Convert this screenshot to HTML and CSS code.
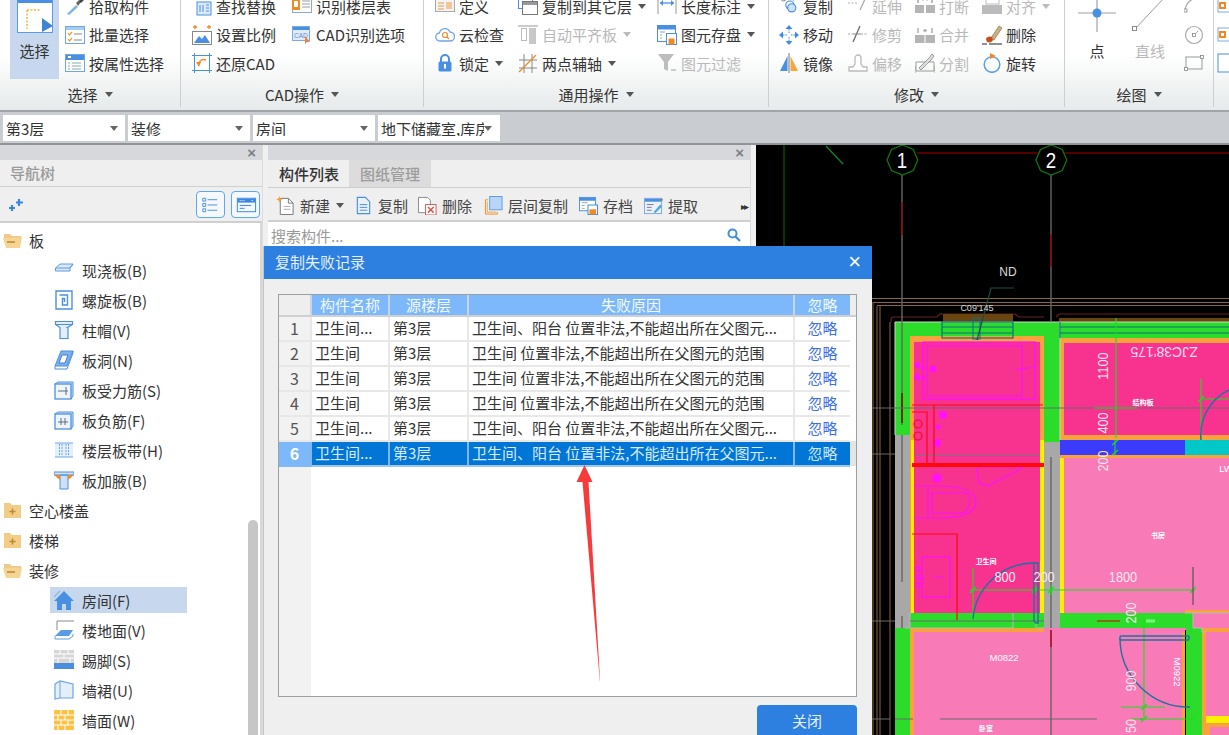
FILE: index.html
```html
<!DOCTYPE html>
<html lang="zh-CN">
<head>
<meta charset="utf-8">
<title>复制失败记录</title>
<link rel="stylesheet" href="styles.css">
</head>
<body>
<svg class="defs" width="0" height="0" aria-hidden="true">
  <defs>
    <symbol id="i-pick" viewBox="0 0 20 20"><path d="M2 18 11 9l2 2-9 8z" fill="#7fb2ea"/><path d="M11 7l3-3 2 2-3 4z" fill="#666"/><path d="M14 5l3-3 2 2-3 3z" fill="#444"/></symbol>
    <symbol id="i-batch" viewBox="0 0 20 20"><rect x=".5" y="1.5" width="19" height="17" fill="#fff" stroke="#6ea6e6"/><rect x="1" y="2" width="18" height="3" fill="#a9cbf2"/><path d="M3 8l1.5 2 2.5-3M3 14l1.5 2 2.5-3" fill="none" stroke="#f0993a" stroke-width="1.2"/><path d="M9 9h8M9 15h8" stroke="#888"/></symbol>
    <symbol id="i-attr" viewBox="0 0 20 20"><rect x=".5" y="1.5" width="19" height="17" fill="#fff" stroke="#6ea6e6"/><rect x="1" y="2" width="18" height="5" fill="#4a90e2"/><rect x="3" y="3" width="3" height="2" fill="#fff"/><path d="M3 10h2M7 10h9M3 13h2M7 13h9M3 16h2M7 16h9" stroke="#8aa"/></symbol>
    <symbol id="i-find" viewBox="0 0 20 20"><rect x="5" y="6" width="14" height="13" fill="#dce9f9" stroke="#4a90e2"/><path d="M8 9v7M11 9v7M14 9h3M14 12h3M14 15h3" stroke="#4a90e2"/><path d="M15 0v4M13.500 2h3" stroke="#f08a24" stroke-width="1.200"/><rect x="0" y="0" width="5" height="3" fill="#bbb"/></symbol>
    <symbol id="i-scale" viewBox="0 0 20 20"><rect x=".5" y="6.500" width="19" height="13" fill="#fff" stroke="#888"/><path d="M2 18 7 11l3 3 3-4 5 8z" fill="#4a90e2"/><path d="M3 0v4M1 2h4M17 0v4M15 2h4" stroke="#f08a24" stroke-width="1.300"/></symbol>
    <symbol id="i-restore" viewBox="0 0 20 20"><rect x="2.500" y="2.500" width="15" height="15" fill="#fff" stroke="#4a90e2"/><path d="M0 2.500h5M0 17.500h5M15 2.500h5M15 17.500h5M2.500 0v5M17.500 0v5M2.500 15v5M17.500 15v5" stroke="#4a90e2"/><path d="M14 7a5 5 0 0 0-7 3" fill="none" stroke="#f08a24" stroke-width="1.500"/><path d="M4 9l5 0-2 5z" fill="#f08a24"/></symbol>
    <symbol id="i-floor" viewBox="0 0 20 20"><rect x=".5" y="1.500" width="19" height="15" fill="#fff" stroke="#8aa9cf"/><rect x="0" y="3" width="8" height="11" fill="#f08a24"/><rect x="2" y="5" width="4" height="6" fill="#fff"/><path d="M10 5h8M10 8h8M10 11h8" stroke="#99a"/></symbol>
    <symbol id="i-cadopt" viewBox="0 0 20 20"><rect x=".5" y="1.500" width="17" height="14" fill="#dfeafa" stroke="#7ea9de"/><rect x="1" y="2" width="16" height="3" fill="#4a90e2"/><text x="2" y="13" font-size="6.500" fill="#5b8fd0" font-family="Liberation Sans, sans-serif">CAD</text><path d="M13 11v8l2-2 3 0z" fill="#f0803c"/></symbol>
    <symbol id="i-def" viewBox="0 0 20 20"><rect x=".5" y=".5" width="19" height="15" fill="#f3f3f3" stroke="#aaa"/><rect x="1" y="1" width="18" height="3" fill="#d8b380"/><path d="M3 7h6M3 10h6M3 13h6" stroke="#e59c3c"/><rect x="11" y="6" width="6" height="7" fill="#f0c896"/></symbol>
    <symbol id="i-cloud" viewBox="0 0 20 20"><path d="M5 16a4 4 0 0 1-.500-8 5.500 5.500 0 0 1 10.500-1 4.500 4.500 0 0 1 0 9z" fill="#fff" stroke="#6ea6e6" stroke-width="1.300"/><circle cx="10" cy="10" r="2.500" fill="none" stroke="#ef8a2b" stroke-width="1.200"/><path d="M12 12l2 2" stroke="#ef8a2b" stroke-width="1.200"/></symbol>
    <symbol id="i-lock" viewBox="0 0 20 20"><path d="M6 9V6a4 4 0 0 1 8 0v3" fill="none" stroke="#4a90e2" stroke-width="2"/><rect x="3.500" y="8.500" width="13" height="10" rx="1.500" fill="#4a90e2"/><rect x="9" y="11" width="2" height="4.500" fill="#fff"/></symbol>
    <symbol id="i-copyfloor" viewBox="0 0 20 20"><rect x=".5" y=".5" width="14" height="12" fill="#fff" stroke="#4a90e2"/><rect x="1" y="1" width="13" height="2" fill="#4a90e2"/><rect x="4.500" y="5.500" width="15" height="13" fill="#fff" stroke="#777"/><rect x="5" y="6" width="14" height="3" fill="#999"/></symbol>
    <symbol id="i-autoalign" viewBox="0 0 20 20"><path d="M0 1h20" stroke="#bbb" stroke-width="1.500"/><rect x="3.500" y="3.500" width="5" height="12" fill="#fff" stroke="#bbb"/><rect x="11" y="3" width="7" height="16" fill="#c8c8c8"/></symbol>
    <symbol id="i-axis" viewBox="0 0 20 20"><path d="M1 7h18M1 15h18M6 1v19M14 1v19" stroke="#888"/><path d="M1 19 18 2" stroke="#f08a24" stroke-width="1.300"/></symbol>
    <symbol id="i-len" viewBox="0 0 20 20"><path d="M1 1v17M19 1v17" stroke="#9a9a9a"/><path d="M3 7h14" stroke="#4a90e2" stroke-width="1.300"/><path d="M3 7l3-3v6zM17 7l-3-3v6z" fill="#4a90e2"/></symbol>
    <symbol id="i-saveel" viewBox="0 0 20 20"><rect x=".5" y=".5" width="18" height="16" fill="#fff" stroke="#4a90e2"/><rect x="1" y="1" width="17" height="3.500" fill="#4a90e2"/><path d="M3 7h5M3 10h2M3 13h2" stroke="#8aa"/><rect x="9.500" y="8.500" width="10" height="11" fill="#fff" stroke="#4a90e2"/><rect x="11.500" y="13.500" width="6" height="6" fill="#f08a24"/></symbol>
    <symbol id="i-filter" viewBox="0 0 20 20"><path d="M1 1h16l-6 8v9l-4-2V9z" fill="#bdbdbd"/><path d="M14 17h5" stroke="#bdbdbd" stroke-width="1.500"/></symbol>
    <symbol id="i-copy" viewBox="0 0 22 20"><circle cx="5" cy="2" r="2.500" fill="#fff" stroke="#777"/><circle cx="16" cy="2" r="1.500" fill="none" stroke="#777"/><path d="M18 1l2 0" stroke="#777"/><circle cx="12" cy="9" r="4.500" fill="#fff" stroke="#4a90e2" stroke-width="1.300"/><circle cx="14" cy="12" r="4.500" fill="#cfe2f8" stroke="#4a90e2" stroke-width="1.300"/></symbol>
    <symbol id="i-move" viewBox="0 0 20 20"><path d="M10 0l3.500 4h-7zM10 20l-3.500-4h7zM0 10l4-3.500v7zM20 10l-4 3.500v-7z" fill="#3f8be0"/><path d="M10 4v4M10 12v4M4 10h4M12 10h4" stroke="#3f8be0" stroke-dasharray="1.500 1"/></symbol>
    <symbol id="i-mirror" viewBox="0 0 20 20"><path d="M8.500 3v15H1z" fill="#4a90e2"/><path d="M11.500 3v15H19z" fill="#f7a83a"/><path d="M10 0v20" stroke="#777"/></symbol>
    <symbol id="i-extend" viewBox="0 0 20 20"><path d="M0 7h10" stroke="#aaa" stroke-dasharray="2 1.500"/><path d="M12 14 18 1" stroke="#aaa" stroke-width="1.300"/></symbol>
    <symbol id="i-trim" viewBox="0 0 20 20"><path d="M0 9h5M13 9h7" stroke="#aaa" stroke-dasharray="2 1.500"/><path d="M5 17 12 1" stroke="#666" stroke-width="1.200"/><path d="M5 9h8" stroke="#888"/></symbol>
    <symbol id="i-offset" viewBox="0 0 20 20"><path d="M1 18v-4h4l2-3V5a3 3 0 0 1 6 0v6l2 3h4v4z" fill="#fff" stroke="#bbb" stroke-width="1.300"/></symbol>
    <symbol id="i-break" viewBox="0 0 20 20"><rect x="0" y="9" width="9" height="8" fill="#b5b5b5"/><rect x="11" y="9" width="9" height="8" fill="#b5b5b5"/><path d="M3 2v5M17 2v5" stroke="#bbb" stroke-width="2"/><path d="M7 4h2M11 4h2" stroke="#bbb"/></symbol>
    <symbol id="i-merge" viewBox="0 0 20 20"><rect x="0" y="10" width="20" height="8" fill="#b5b5b5"/><path d="M10 10v8" stroke="#fff"/><path d="M3 3v5M17 3v5M10 4v3M8 5.500h4" stroke="#b5b5b5" stroke-width="1.600"/></symbol>
    <symbol id="i-split" viewBox="0 0 20 20"><path d="M1 9h18v9H1z" fill="none" stroke="#999"/><path d="M4 15l10-10 3-4 2 2-3 4L6 17z" fill="#ddd" stroke="#888" stroke-width=".8"/><path d="M0 13v7M20 13v7" stroke="#999"/></symbol>
    <symbol id="i-align" viewBox="0 0 20 20"><rect x="4" y="0" width="13" height="8" fill="#fff" stroke="#bbb"/><rect x="0" y="9" width="20" height="9" fill="#bbb"/></symbol>
    <symbol id="i-erase" viewBox="0 0 20 20"><path d="M9 13 17 1l3 2-8 12z" fill="#c8b08a" stroke="#8d7448" stroke-width=".7"/><path d="M4 14a4 3 0 0 1 6-2l1 3a4 3 0 0 1-6 2z" fill="#c6501b"/><path d="M0 19h5M7 19h13" stroke="#222" stroke-width="1.200"/></symbol>
    <symbol id="i-rotate" viewBox="0 0 20 20"><circle cx="10" cy="11.500" r="7.800" fill="none" stroke="#5aa0ea" stroke-width="1.500"/><path d="M8 0v6l6-3z" fill="#f08a24"/></symbol>
    <symbol id="i-point" viewBox="0 0 38 36"><path d="M0 16h15M23 16h15M19 0v12M19 20v15" stroke="#9aa4ad" stroke-width="1.200"/><circle cx="19" cy="16" r="4.500" fill="#4a90e2"/></symbol>
    <symbol id="i-line" viewBox="0 0 38 36"><path d="M4 32 33 1" stroke="#999"/><rect x="1.500" y="29.500" width="4" height="4" fill="#fff" stroke="#888"/></symbol>
    <symbol id="i-arc" viewBox="0 0 20 20"><path d="M1 14C2 7 6 3 14 1" fill="none" stroke="#aaa" stroke-width="1.200"/><rect x="0" y="13" width="3" height="3" fill="#fff" stroke="#888" stroke-width=".8"/><rect x="13" y="0" width="3" height="3" fill="#fff" stroke="#888" stroke-width=".8"/></symbol>
    <symbol id="i-circle" viewBox="0 0 20 20"><circle cx="10" cy="10" r="8.500" fill="none" stroke="#aaa" stroke-width="1.200"/><rect x="8.500" y="8.500" width="3" height="3" fill="#fff" stroke="#888" stroke-width=".8"/><path d="M11 9l3-3" stroke="#aaa"/></symbol>
    <symbol id="i-rect" viewBox="0 0 20 20"><rect x="2" y="4" width="16" height="12" fill="none" stroke="#aaa" stroke-width="1.200"/><rect x=".5" y="14.500" width="3" height="3" fill="#fff" stroke="#888" stroke-width=".8"/><rect x="16.500" y="2.500" width="3" height="3" fill="#fff" stroke="#888" stroke-width=".8"/></symbol>
    <symbol id="i-edge" viewBox="0 0 14 20"><rect x="1" y="3" width="13" height="13" fill="#fff" stroke="#7ea9de"/><rect x="2" y="6" width="7" height="7" fill="#f08a24"/><rect x="4" y="8" width="3" height="3" fill="#fff"/></symbol>
    <symbol id="i-edge2" viewBox="0 0 14 20"><rect x="1" y="1" width="13" height="18" fill="#fff" stroke="#4a90e2"/></symbol>
    <symbol id="i-sparkle" viewBox="0 0 16 16"><path d="M3 9v6M0 12h6M10 3v7M7 6.500h7" stroke="#3a86e0" stroke-width="2.200"/></symbol>
    <symbol id="i-listview" viewBox="0 0 28 26"><path d="M6 6.500h3v3H6zM6 12h3v3H6zM6 17.500h3v3H6z" fill="none" stroke="#4a90e2"/><path d="M11 8h10M11 13.500h10M11 19h10" stroke="#4a90e2"/></symbol>
    <symbol id="i-paneview" viewBox="0 0 28 26"><rect x="5.500" y="6.500" width="19" height="14" fill="none" stroke="#3a86e0"/><rect x="6" y="7" width="18" height="4" fill="#3a86e0"/><path d="M8 9h1M10 9h1M12 9h1" stroke="#fff"/><path d="M20 8.500l2 0-1 1.500z" fill="#fff"/><path d="M8 14h12M8 17h5" stroke="#3a86e0"/></symbol>
    <symbol id="i-new" viewBox="0 0 20 20"><path d="M4.500 2.500H13l5 5v12H4.500z" fill="#fff" stroke="#777"/><path d="M13 2.500v5h5" fill="none" stroke="#777"/><path d="M8 11h7M8 14h7" stroke="#aaa"/><path d="M3.500 0l1 2.500L7 3.500 4.500 4.500 3.500 7 2.500 4.500 0 3.500l2.500-1z" fill="#f4a23a"/></symbol>
    <symbol id="i-tcopy" viewBox="0 0 20 20"><path d="M3.500 1.500H12l4.500 4.500v12.500h-13z" fill="#e8f1fc" stroke="#4a90e2" stroke-width="1.200"/><path d="M6 9h8M6 12h8M6 15h8" stroke="#4a90e2"/></symbol>
    <symbol id="i-tdel" viewBox="0 0 20 20"><path d="M.5 1.500H10l3 3v13H.5z" fill="#fff" stroke="#888"/><rect x="8" y="9" width="11" height="11" fill="#fff" stroke="#d9534f"/><path d="M10.500 11.500l6 6M16.500 11.500l-6 6" stroke="#d9534f" stroke-width="1.500"/></symbol>
    <symbol id="i-tfloor" viewBox="0 0 20 20"><rect x="6" y=".5" width="13" height="14" fill="#b9d6f7" stroke="#5a9be6"/><path d="M4 4H1.500v15H14v-2" fill="none" stroke="#f08a24"/><path d="M3.500 6v11H13" fill="none" stroke="#f4b26a" stroke-width="1.300"/></symbol>
    <symbol id="i-tsave" viewBox="0 0 20 20"><rect x=".5" y="1.500" width="17" height="14" fill="#fff" stroke="#4a90e2"/><rect x="1" y="2" width="16" height="3" fill="#4a90e2"/><path d="M3 7h6M3 10h3M3 13h3" stroke="#8aa"/><rect x="9.500" y="9.500" width="10" height="10" fill="#fff" stroke="#3a86e0"/><rect x="11" y="14" width="7" height="5.500" fill="#f08a24"/></symbol>
    <symbol id="i-tget" viewBox="0 0 20 20"><rect x=".5" y="2.500" width="18" height="16" fill="#e8f1fc" stroke="#7ea9de"/><rect x="1" y="3" width="17" height="3" fill="#4a90e2"/><path d="M3 9h7M3 12h5M3 15h5" stroke="#778"/><path d="M10 17l7-8 2 2-7 7z" fill="#50a8d8"/><path d="M17 3l3 0-1 3z" fill="#888"/></symbol>
    <symbol id="i-search" viewBox="0 0 14 14"><circle cx="5.500" cy="5.500" r="4" fill="none" stroke="#3f8fd8" stroke-width="2"/><path d="M8.500 8.500 13 13" stroke="#3f8fd8" stroke-width="2.200"/></symbol>
    <symbol id="i-fopen" viewBox="0 0 20 18"><path d="M1 3h6l2 2h9v3H1z" fill="#eecb8a"/><path d="M0 7h17l2-1-2 11H3z" fill="#f6d492"/><rect x="4" y="10" width="8" height="2" fill="#c79a47"/></symbol>
    <symbol id="i-fplus" viewBox="0 0 20 18"><path d="M1 2h6l2 2h8v2H1z" fill="#eecb8a"/><rect x="1" y="4" width="17" height="13" fill="#f3cd85"/><path d="M6.500 10.500h6M9.500 7.500v6" stroke="#b88a38" stroke-width="1.500"/></symbol>
    <symbol id="t-cast" viewBox="0 0 20 20"><path d="M1.500 8 6 4h13l-3 4v3H1.500z" fill="#dbe9fa" stroke="#5a9be6"/><path d="M1.500 8H16M16 8l3-4" fill="none" stroke="#5a9be6"/></symbol>
    <symbol id="t-spiral" viewBox="0 0 20 20"><path d="M2 1h16v18H2zM5.500 5h8v10h-5V8.500h2V12" fill="none" stroke="#4a90e2" stroke-width="1.400"/></symbol>
    <symbol id="t-cap" viewBox="0 0 20 20"><path d="M1.500 1.500h17v3l-5 3H14v11H6V7.500l-4.500-3z" fill="#e4effb" stroke="#4a90e2" stroke-width="1.200"/><path d="M1.500 4.500h17" stroke="#4a90e2"/></symbol>
    <symbol id="t-hole" viewBox="0 0 20 20"><path d="M1 16 7 1h12l-6 15z" fill="#7fb2ea" stroke="#4a90e2"/><path d="M1 16v3h12l6-16V1" fill="none" stroke="#4a90e2"/><path d="M8 5h6l-3 8H5z" fill="#fff" stroke="#3a7fd0"/></symbol>
    <symbol id="t-rebar" viewBox="0 0 20 20"><path d="M1 4l3-2h15v14l-2 3" fill="#cfe1f7" stroke="#4a90e2"/><rect x="1" y="4" width="16" height="15" fill="#eef5fd" stroke="#4a90e2" stroke-width="1.300"/><path d="M4 11h10M12 7v8" stroke="#5a6f88"/></symbol>
    <symbol id="t-neg" viewBox="0 0 20 20"><path d="M1 4l3-2h15v14l-2 3" fill="#cfe1f7" stroke="#4a90e2"/><rect x="1" y="4" width="16" height="15" fill="#eef5fd" stroke="#4a90e2" stroke-width="1.300"/><path d="M4 12h10M7 8v7M11 8v7" stroke="#5a6f88"/></symbol>
    <symbol id="t-band" viewBox="0 0 20 20"><rect x="1" y="3" width="18" height="14" fill="#e4effb"/><path d="M1 3h18M1 17h18" stroke="#6ea6e6"/><path d="M5.500 4v12M8 4v12M12 4v12M14.500 4v12" stroke="#6ea6e6" stroke-dasharray="2 1"/></symbol>
    <symbol id="t-hau" viewBox="0 0 20 20"><path d="M0 2h20v3H0zM6 5h8v14H6z" fill="#cfe1f7" stroke="#4a90e2"/><path d="M0 5h6v5zM20 5h-6v5z" fill="#f08a24"/></symbol>
    <symbol id="t-room" viewBox="0 0 20 20"><path d="M10 1 0 11h3v9h5v-6h4v6h5v-9h3z" fill="#4a90e2"/><path d="M0 7l6-6" stroke="#8ab8ee" stroke-width="1.500"/></symbol>
    <symbol id="t-floor" viewBox="0 0 20 20"><path d="M3 10V1h17" fill="none" stroke="#888"/><path d="M1 16 7 10h12l-4 6z" fill="#5a9be6"/><path d="M1 16v3h14l4-3v-2" fill="none" stroke="#5a9be6"/></symbol>
    <symbol id="t-skirt" viewBox="0 0 20 20"><rect x="0" y="0" width="20" height="13" fill="#d6d6d6"/><path d="M0 4h20M0 8h20M6 0v4M14 0v4M10 4v4M4 8v5M16 8v5" stroke="#fff"/><rect x="0" y="13" width="20" height="6" fill="#4a8fdc"/></symbol>
    <symbol id="t-dado" viewBox="0 0 20 20"><path d="M1 4 6 1l13 3v14H6L1 19z" fill="#e4effb" stroke="#6ea6e6" stroke-width="1.200"/><path d="M6 1v17" stroke="#6ea6e6"/></symbol>
    <symbol id="t-wall" viewBox="0 0 20 20"><rect x="0" y="0" width="20" height="20" fill="#fdc244"/><path d="M0 5h20M0 10h20M0 15h20M7 0v5M14 0v5M4 5v5M11 5v5M7 10v5M14 10v5M4 15v5M11 15v5" stroke="#fff" stroke-width="1.100"/></symbol>
  </defs>
</svg>

<div class="app">
  <header class="ribbon">
    <div class="groups">
      <section class="group g-select">
        <div class="gbody">
          <div class="bigbtn selected">
            <svg class="bigsel" viewBox="0 0 36 34"><rect x=".5" y=".5" width="35" height="33" fill="#fff" stroke="#5a9be6"/><rect x="1" y="0" width="34" height="4" fill="#4a90e2"/><path d="M10 11h14M10 11v19" stroke="#f5b63a" stroke-width="1.500" stroke-dasharray="2 1.500"/><path d="M25 19v14l11-6z" fill="#3f84d4"/></svg>
            <span>选择</span>
          </div>
          <div class="col">
            <div class="item"><svg class="ic"><use href="#i-pick"/></svg><span>拾取构件</span></div>
            <div class="item"><svg class="ic"><use href="#i-batch"/></svg><span>批量选择</span></div>
            <div class="item"><svg class="ic"><use href="#i-attr"/></svg><span>按属性选择</span></div>
          </div>
        </div>
        <div class="glabel">选择<i class="caret"></i></div>
      </section>
      <section class="group g-cad">
        <div class="gbody">
          <div class="col w100">
            <div class="item"><svg class="ic"><use href="#i-find"/></svg><span>查找替换</span></div>
            <div class="item"><svg class="ic"><use href="#i-scale"/></svg><span>设置比例</span></div>
            <div class="item"><svg class="ic"><use href="#i-restore"/></svg><span>还原CAD</span></div>
          </div>
          <div class="col">
            <div class="item"><svg class="ic"><use href="#i-floor"/></svg><span>识别楼层表</span></div>
            <div class="item"><svg class="ic"><use href="#i-cadopt"/></svg><span>CAD识别选项</span></div>
          </div>
        </div>
        <div class="glabel">CAD操作<i class="caret"></i></div>
      </section>
      <section class="group g-common">
        <div class="gbody">
          <div class="col w83">
            <div class="item"><svg class="ic"><use href="#i-def"/></svg><span>定义</span></div>
            <div class="item"><svg class="ic"><use href="#i-cloud"/></svg><span>云检查</span></div>
            <div class="item"><svg class="ic"><use href="#i-lock"/></svg><span>锁定</span><i class="caret"></i></div>
          </div>
          <div class="col w139">
            <div class="item"><svg class="ic"><use href="#i-copyfloor"/></svg><span>复制到其它层</span><i class="caret"></i></div>
            <div class="item off"><svg class="ic"><use href="#i-autoalign"/></svg><span>自动平齐板</span><i class="caret"></i></div>
            <div class="item"><svg class="ic"><use href="#i-axis"/></svg><span>两点辅轴</span><i class="caret"></i></div>
          </div>
          <div class="col">
            <div class="item"><svg class="ic"><use href="#i-len"/></svg><span>长度标注</span><i class="caret"></i></div>
            <div class="item"><svg class="ic"><use href="#i-saveel"/></svg><span>图元存盘</span><i class="caret"></i></div>
            <div class="item off"><svg class="ic"><use href="#i-filter"/></svg><span>图元过滤</span></div>
          </div>
        </div>
        <div class="glabel">通用操作<i class="caret"></i></div>
      </section>
      <section class="group g-modify">
        <div class="gbody">
          <div class="col w69">
            <div class="item"><svg class="ic"><use href="#i-copy"/></svg><span>复制</span></div>
            <div class="item"><svg class="ic"><use href="#i-move"/></svg><span>移动</span></div>
            <div class="item"><svg class="ic"><use href="#i-mirror"/></svg><span>镜像</span></div>
          </div>
          <div class="col w67">
            <div class="item off"><svg class="ic"><use href="#i-extend"/></svg><span>延伸</span></div>
            <div class="item off"><svg class="ic"><use href="#i-trim"/></svg><span>修剪</span></div>
            <div class="item off"><svg class="ic"><use href="#i-offset"/></svg><span>偏移</span></div>
          </div>
          <div class="col w67">
            <div class="item off"><svg class="ic"><use href="#i-break"/></svg><span>打断</span></div>
            <div class="item off"><svg class="ic"><use href="#i-merge"/></svg><span>合并</span></div>
            <div class="item off"><svg class="ic"><use href="#i-split"/></svg><span>分割</span></div>
          </div>
          <div class="col">
            <div class="item off"><svg class="ic"><use href="#i-align"/></svg><span>对齐</span><i class="caret"></i></div>
            <div class="item"><svg class="ic"><use href="#i-erase"/></svg><span>删除</span></div>
            <div class="item"><svg class="ic"><use href="#i-rotate"/></svg><span>旋转</span></div>
          </div>
        </div>
        <div class="glabel">修改<i class="caret"></i></div>
      </section>
      <section class="group g-draw">
        <div class="gbody">
          <div class="bigbtn plain">
            <svg class="bigdraw"><use href="#i-point"/></svg>
            <span>点</span>
          </div>
          <div class="bigbtn plain off">
            <svg class="bigdraw"><use href="#i-line"/></svg>
            <span>直线</span>
          </div>
          <div class="col">
            <div class="item"><svg class="ic"><use href="#i-arc"/></svg></div>
            <div class="item"><svg class="ic"><use href="#i-circle"/></svg></div>
            <div class="item"><svg class="ic"><use href="#i-rect"/></svg></div>
          </div>
        </div>
        <div class="glabel">绘图<i class="caret"></i></div>
      </section>
      <section class="group g-more">
        <div class="col">
          <div class="item"><svg class="ic narrow"><use href="#i-edge"/></svg></div>
          <div class="item"><svg class="ic narrow"><use href="#i-edge"/></svg></div>
          <div class="item"><svg class="ic narrow"><use href="#i-edge2"/></svg></div>
        </div>
      </section>
    </div>
  </header>

  <div class="selbar">
    <div class="sel"><span class="seltxt">第3层</span><i class="caret"></i></div>
    <div class="sel"><span class="seltxt">装修</span><i class="caret"></i></div>
    <div class="sel"><span class="seltxt">房间</span><i class="caret"></i></div>
    <div class="sel"><span class="seltxt clip">地下储藏室,库房</span><i class="caret"></i></div>
  </div>

  <main class="main">
    <aside class="panel nav">
      <div class="phead"><span class="pclose">×</span></div>
      <div class="ptitle">导航树</div>
      <div class="navtools">
        <svg class="spark"><use href="#i-sparkle"/></svg>
        <span class="fill"></span>
        <button class="vbtn"><svg><use href="#i-listview"/></svg></button>
        <button class="vbtn"><svg><use href="#i-paneview"/></svg></button>
      </div>
      <div class="tree">
        <div class="node"><svg class="fold"><use href="#i-fopen"/></svg><span>板</span></div>
        <div class="leaf"><div class="lrow"><svg class="ic"><use href="#t-cast"/></svg><span>现浇板(B)</span></div></div>
        <div class="leaf"><div class="lrow"><svg class="ic"><use href="#t-spiral"/></svg><span>螺旋板(B)</span></div></div>
        <div class="leaf"><div class="lrow"><svg class="ic"><use href="#t-cap"/></svg><span>柱帽(V)</span></div></div>
        <div class="leaf"><div class="lrow"><svg class="ic"><use href="#t-hole"/></svg><span>板洞(N)</span></div></div>
        <div class="leaf"><div class="lrow"><svg class="ic"><use href="#t-rebar"/></svg><span>板受力筋(S)</span></div></div>
        <div class="leaf"><div class="lrow"><svg class="ic"><use href="#t-neg"/></svg><span>板负筋(F)</span></div></div>
        <div class="leaf"><div class="lrow"><svg class="ic"><use href="#t-band"/></svg><span>楼层板带(H)</span></div></div>
        <div class="leaf"><div class="lrow"><svg class="ic"><use href="#t-hau"/></svg><span>板加腋(B)</span></div></div>
        <div class="node"><svg class="fold"><use href="#i-fplus"/></svg><span>空心楼盖</span></div>
        <div class="node"><svg class="fold"><use href="#i-fplus"/></svg><span>楼梯</span></div>
        <div class="node"><svg class="fold"><use href="#i-fopen"/></svg><span>装修</span></div>
        <div class="leaf"><div class="lrow active"><svg class="ic"><use href="#t-room"/></svg><span>房间(F)</span></div></div>
        <div class="leaf"><div class="lrow"><svg class="ic"><use href="#t-floor"/></svg><span>楼地面(V)</span></div></div>
        <div class="leaf"><div class="lrow"><svg class="ic"><use href="#t-skirt"/></svg><span>踢脚(S)</span></div></div>
        <div class="leaf"><div class="lrow"><svg class="ic"><use href="#t-dado"/></svg><span>墙裙(U)</span></div></div>
        <div class="leaf"><div class="lrow"><svg class="ic"><use href="#t-wall"/></svg><span>墙面(W)</span></div></div>
        <div class="scrollthumb"></div>
      </div>
    </aside>
    <div class="split"></div>
    <section class="panel list">
      <div class="phead"><span class="pclose">×</span></div>
      <div class="tabs">
        <div class="tab on">构件列表</div>
        <div class="tab">图纸管理</div>
      </div>
      <div class="ltools">
        <div class="lt lt-new"><svg class="ic"><use href="#i-new"/></svg><span>新建</span><i class="caret"></i></div>
        <div class="lt lt-copy"><svg class="ic"><use href="#i-tcopy"/></svg><span>复制</span></div>
        <div class="lt lt-del"><svg class="ic"><use href="#i-tdel"/></svg><span>删除</span></div>
        <div class="lt lt-floor"><svg class="ic"><use href="#i-tfloor"/></svg><span>层间复制</span></div>
        <div class="lt lt-save"><svg class="ic"><use href="#i-tsave"/></svg><span>存档</span></div>
        <div class="lt lt-get"><svg class="ic"><use href="#i-tget"/></svg><span>提取</span></div>
        <span class="fill"></span>
        <span class="more">▸▸</span>
      </div>
      <div class="search"><span>搜索构件...</span><svg class="mag"><use href="#i-search"/></svg></div>
    </section>
    <div class="split"></div>
    <section class="canvas">
      <svg class="cad" viewBox="756 145 473 590" preserveAspectRatio="none">
        <rect x="756" y="145" width="473" height="590" fill="#000"/>
        <path d="M784 145v101" stroke="#0a6f0a"/>
        <path d="M826 146l17 18" stroke="#0b8a2a" stroke-width="1.200"/>
        <path d="M917 153h312" stroke="#6d0000" stroke-width="1.500"/>
        <!-- outline lines -->
        <g fill="none" stroke="#8a6a3a">
          <path d="M872 298.500h357M873 302.500h356M877 305.500h352M873 302v433M877 306v429M880 306v429"/>
          <path d="M890 322v413"/>
        </g>
        <path d="M891 322v-3a3 3 0 0 1 3-2H937l3-3h75l4 3h25M1056 317l3-3h170" fill="none" stroke="#6a2020" stroke-width="1.200"/>
        <rect x="943" y="314" width="70" height="8" fill="#6b4510"/>
        <rect x="1059" y="318" width="170" height="4" fill="#6b4510"/>
        <!-- walls -->
        <rect x="895" y="322" width="334" height="18" fill="#2bdc2b"/>
        <rect x="895" y="322" width="15" height="413" fill="#2bdc2b"/>
        <rect x="1044" y="322" width="16" height="120" fill="#2bdc2b"/>
        <rect x="910" y="613" width="134" height="15" fill="#2bdc2b"/>
        <rect x="1060" y="613" width="127" height="15" fill="#2bdc2b"/>
        <!-- rooms -->
        <rect x="910" y="336" width="134" height="277" fill="#f9a13a"/>
        <rect x="914" y="342" width="126" height="271" fill="#f7338f"/>
        <rect x="1060" y="338" width="169" height="102" fill="#f9a13a"/>
        <rect x="1064" y="343" width="165" height="92" fill="#f7338f"/>
        <rect x="1060" y="455" width="169" height="158" fill="#f9a13a"/>
        <rect x="1064" y="458" width="165" height="155" fill="#f87ab6"/>
        <rect x="1060" y="458" width="4" height="155" fill="#ffef00"/>
        <rect x="911" y="440" width="3" height="173" fill="#ffef00"/>
        <rect x="1040" y="440" width="4" height="173" fill="#ffef00"/>
        <rect x="1060" y="440" width="125" height="15" fill="#3b3bff"/>
        <rect x="1185" y="440" width="44" height="15" fill="#00c8c8"/>
        <rect x="910" y="628" width="275" height="107" fill="#f9a13a"/>
        <rect x="914" y="632" width="268" height="103" fill="#f87ab6"/>
        <rect x="1044" y="628" width="141" height="4" fill="#f87ab6"/>
        <rect x="1185" y="610" width="44" height="3" fill="#f9a13a"/>
        <rect x="1185" y="613" width="44" height="17" fill="#f87ab6"/>
        <rect x="1185" y="613" width="8" height="15" fill="#2bdc2b"/>
        <rect x="1186" y="628" width="16" height="107" fill="#2bdc2b"/>
        <rect x="1202" y="628" width="27" height="107" fill="#f9a13a"/>
        <rect x="1206" y="632" width="23" height="84" fill="#f87ab6"/>
        <rect x="1206" y="716" width="23" height="7" fill="#ffef00"/>
        <rect x="1210" y="727" width="19" height="8" fill="#f87ab6"/>
        <!-- grey columns -->
        <rect x="895" y="435" width="15" height="193" fill="#a8a8a8"/>
        <rect x="1044" y="442" width="16" height="186" fill="#a8a8a8"/>
        <path d="M905 628h5V613h1M911 628h102v-15M1037 628h7M1036 620v8" fill="none" stroke="#bbb"/>
        <path d="M1185 613h44M1193 613v15h9v4h4" fill="none" stroke="#bbb"/>
        <path d="M895 322h334M895 322v113M1060 322v118" fill="none" stroke="#cfd4cf"/>
        <!-- window -->
        <g fill="none" stroke="#0e6f80">
          <rect x="942" y="322" width="71" height="16" stroke-width="1.200"/>
          <path d="M942 327h71M942 333h71M1060 322v16M1060 327h169M1060 333h169" stroke-width="1.200"/>
          <rect x="973" y="318" width="7" height="21"/>
        </g>
        <!-- grid axes -->
        <g fill="none" stroke="#666" stroke-width="1.400">
          <path d="M902 175v250M902 435v147M902 616v12M1051 175v147M1051 457v171M1051 647v88"/>
        </g>
        <path d="M902 202v33M1051 234v33M902 393v30M1051 630v17" stroke="#8a0000" stroke-width="1.400"/>
        <path d="M887 160l4.500-10.600 10.900-4.400 10.900 4.400 4.500 10.600-4.500 10.600-10.900 4.400-10.900-4.400zM1036 160l4.500-10.600 10.900-4.400 10.900 4.400 4.500 10.600-4.500 10.600-10.900 4.400-10.900-4.400z" fill="#000" stroke="#0c7a0c" stroke-width="1.200"/>
        <text class="axis" transform="translate(902 168) scale(.85 1)">1</text>
        <text class="axis" transform="translate(1051 168) scale(.85 1)">2</text>
        <text class="cadt small" x="1008" y="276">ND</text>
        <path d="M1014 288h-23l-14 52" fill="none" stroke="#17504a" stroke-width="1.200"/>
        <text class="cadt tiny" x="977" y="311">C09'145</text>
        <!-- horizontal grey datum lines -->
        <path d="M872 408h357M872 454h23M872 621h23M910 621h134M895 719h18M940 719h157M1140 719h3M860 719h30" stroke="#6a6a6a"/>
        <path d="M915 455h125" stroke="#777"/>
        <!-- bath fixtures -->
        <g fill="none" stroke="#ff10ff" stroke-width="1.200">
          <rect x="923" y="342" width="112" height="57"/>
          <rect x="927" y="346" width="95" height="50"/>
          <path d="M1015 370l20-3"/>
          <path d="M977 468l2 15 8 3 28-14 8-5h-44"/>
          <path d="M914 486h24c26 0 38 5 38 16s-12 16-38 16h-24M928 487v31M932 493h33c8 0 6 20-4 20h-29z"/>
          <rect x="922" y="557" width="28" height="40"/>
          <path d="M915 578h10M934 577h10"/>
          <rect x="916" y="567" width="4" height="4"/><rect x="916" y="575" width="4" height="4"/><rect x="916" y="583" width="4" height="4"/>
        </g>
        <g fill="#ff10ff"><circle cx="933" cy="369" r="3.500"/><circle cx="917" cy="365" r="3"/><circle cx="917" cy="377" r="3"/><circle cx="923" cy="368" r="2"/><circle cx="923" cy="378" r="2"/><circle cx="943" cy="415" r="4"/><circle cx="938" cy="427" r="2.500"/><circle cx="937" cy="443" r="4"/><circle cx="937" cy="478" r="4.500"/></g>
        <g fill="none" stroke="#ff0808" stroke-width="1.200">
          <path d="M912 405h131M934 405v62M912 412h15v55"/>
          <circle cx="918" cy="424" r="4"/><circle cx="918" cy="436" r="4"/>
          <path d="M912 534h45v86"/>
        </g>
        <rect x="912" y="463" width="132" height="4" fill="#ff0808"/>
        <!-- dimensions -->
        <g fill="none" stroke="#18e018" stroke-width="1.100">
          <path d="M1116 318v120M1094 408h43"/>
          <path d="M1115 440v15M1112 445l6-5M1112 455l6-5"/>
          <path d="M970 590h225M973 568v45M1035 585v10M1051 585v10M970 593l6-6M1032 593l6-6M1048 593l6-6M1190 593l6-6"/>
          <path d="M1144 618v100M1121 707h44M1130 719h65M1141 710l6-6M1141 722l6-6"/>
          <path d="M1201 379v61M1201 399h28M1198 402l6-6"/>
        </g>
        <path d="M1193 567v38" stroke="#555" stroke-width="1.200"/>
        <path d="M1146 621h9" stroke="#7f7" stroke-width="3"/>
        <path d="M1097 621h23" stroke="#a04810" stroke-width="1.500"/>
        <!-- doors -->
        <g fill="none" stroke="#1f72a0" stroke-width="1.400">
          <path d="M973 619A61 61 0 0 1 1034 563"/>
          <path d="M1034 563v58l2 2h2v-60h-4"/>
          <path d="M1120 638A69 69 0 0 0 1190 707"/>
          <rect x="1120" y="636" width="69" height="4" rx="1"/>
          <path d="M1229 390A50 50 0 0 0 1201 440"/>
        </g>
        <!-- texts -->
        <text class="cadt dim" transform="translate(1108 366) rotate(-90) scale(.85 1)">1100</text>
        <text class="cadt dim" transform="translate(1108 423) rotate(-90) scale(.85 1)">400</text>
        <text class="cadt dim" transform="translate(1108 461) rotate(-90) scale(.85 1)">200</text>
        <text class="cadt dim" transform="translate(1005 582) scale(.85 1)">800</text>
        <text class="cadt dim" transform="translate(1044 582) scale(.85 1)">200</text>
        <text class="cadt dim" transform="translate(1123 582) scale(.85 1)">1800</text>
        <text class="cadt dim" transform="translate(1136 613) rotate(-90) scale(.85 1)">200</text>
        <text class="cadt dim" transform="translate(1136 681) rotate(-90) scale(.85 1)">900</text>
        <text class="cadt dim" transform="translate(1136 726) rotate(-90) scale(.85 1)">50</text>
        <text class="cadt rev" transform="translate(1164 347) rotate(180)">ZJC38'175</text>
        <text class="cadt mark" x="1004" y="661">M0822</text>
        <text class="cadt mark" transform="translate(1174 672) rotate(90)">M0922</text>
        <text class="cadt mark" x="1226" y="472">LW</text>
        <text class="cadt nano" x="1143" y="405">结构板</text>
        <text class="cadt nano" x="986" y="564">卫生间</text>
        <text class="cadt nano" x="1158" y="538">书房</text>
        <text class="cadt nano" x="986" y="731">卧室</text>
      </svg>
    </section>
  </main>

  <div class="dialog">
    <div class="dtitle"><span>复制失败记录</span><span class="dclose">×</span></div>
    <div class="dbody">
      <div class="frame">
        <table class="grid">
          <colgroup><col class="c0"><col class="c1"><col class="c2"><col class="c3"><col class="c4"><col class="c5"></colgroup>
          <thead>
            <tr><th class="corner"></th><th>构件名称</th><th>源楼层</th><th>失败原因</th><th>忽略</th><th class="corner"></th></tr>
          </thead>
          <tbody>
            <tr><th>1</th><td>卫生间...</td><td>第3层</td><td>卫生间、阳台 位置非法,不能超出所在父图元...</td><td class="ign">忽略</td><td class="pad"></td></tr>
            <tr><th>2</th><td>卫生间</td><td>第3层</td><td>卫生间 位置非法,不能超出所在父图元的范围</td><td class="ign">忽略</td><td class="pad"></td></tr>
            <tr><th>3</th><td>卫生间</td><td>第3层</td><td>卫生间 位置非法,不能超出所在父图元的范围</td><td class="ign">忽略</td><td class="pad"></td></tr>
            <tr><th>4</th><td>卫生间</td><td>第3层</td><td>卫生间 位置非法,不能超出所在父图元的范围</td><td class="ign">忽略</td><td class="pad"></td></tr>
            <tr><th>5</th><td>卫生间...</td><td>第3层</td><td>卫生间、阳台 位置非法,不能超出所在父图元...</td><td class="ign">忽略</td><td class="pad"></td></tr>
            <tr class="cur"><th>6</th><td>卫生间...</td><td>第3层</td><td>卫生间、阳台 位置非法,不能超出所在父图元...</td><td class="ign">忽略</td><td class="pad"></td></tr>
          </tbody>
        </table>
      </div>
      <div class="dfoot"><button class="closebtn">关闭</button></div>
    </div>
  </div>

  <svg class="arrow" viewBox="0 0 30 225"><path d="M15 0 23 17 19 17 31 223 13 17 7 17Z" fill="#f73a3a"/></svg>
</div>
</body>
</html>
```

FILE: styles.css
```css
* { box-sizing: border-box; }
html, body { margin: 0; padding: 0; }
body {
  width: 1229px; height: 735px; overflow: hidden; position: relative;
  font-family: "Noto Sans CJK SC", "Liberation Sans", sans-serif;
  font-size: 15px; line-height: 1; color: #333;
  background: #eee;
}
.defs { position: absolute; }
.app { width: 1229px; height: 735px; display: flex; flex-direction: column; overflow: hidden; position: relative; }

/* ribbon */
.ribbon {
  height: 112px; flex: none; overflow: hidden;
  background: linear-gradient(#fff 0, #fff 55px, #e6eaea 110px);
  border-bottom: 2px solid #a2a5a8;
}
.groups { display: flex; height: 110px; margin-top: 0; }
.group { display: flex; flex-direction: column; flex: none; height: 107px; border-right: 1px solid #ccd0d2; }
.gbody { display: flex; height: 86.5px; flex: none; margin-top: -8px; }
.g-select { width: 181px; }
.g-select .gbody { padding-left: 10px; }
.g-cad { width: 243px; }
.g-cad .gbody { padding-left: 11px; }
.g-common { width: 345px; }
.g-common .gbody { padding-left: 11px; }
.g-modify { width: 296px; }
.g-modify .gbody { padding-left: 10px; }
.g-draw { width: 149px; }
.g-draw .gbody { padding-left: 13px; }
.g-more { border: 0; margin-top: -8px; padding-left: 3px; width: 15px; }
.col { display: flex; flex-direction: column; flex: none; }
.w100 { width: 100px; }
.w83 { width: 83px; }
.w139 { width: 139px; }
.w69 { width: 69px; }
.w67 { width: 67px; }
.item { height: 28.5px; display: flex; align-items: center; gap: 4px; white-space: nowrap; flex: none; }
.item.off { color: #b9b9b9; }
.ic { width: 20px; height: 20px; flex: none; }
.narrow { width: 14px; }
.caret {
  display: inline-block; width: 0; height: 0; flex: none;
  border-left: 4px solid transparent; border-right: 4px solid transparent; border-top: 5px solid #555;
}
.item .caret { margin-left: 2px; }
.item.off .caret { border-top-color: #bbb; }
.glabel { flex: 1; display: flex; align-items: center; justify-content: center; gap: 7px; }
.glabel { padding-top: 4px; }

.bigbtn { display: flex; flex-direction: column; align-items: center; height: 87px; flex: none; }
.bigbtn.selected { width: 49px; margin-right: 6px; background: #c6d7ee; height: 87px; }
.bigsel { width: 36px; height: 34px; flex: none; margin-top: 7px; }
.bigbtn.selected span { margin-top: 10px; }
.bigbtn.plain { width: 38px; margin-right: 15px; }
.bigdraw { width: 38px; height: 36px; flex: none; margin-top: 5px; }
.bigbtn.plain span { margin-top: 10px; }
.bigbtn.off { color: #b9b9b9; }

/* selector bar */
.selbar { height: 33px; flex: none; display: flex; gap: 3px; padding: 3px; background: #c9ccd1; border-bottom: 2px solid #909396; }
.sel { width: 122px; height: 26px; background: #fff; display: flex; align-items: center; padding: 0 4px 0 3px; }
.seltxt { flex: 1; white-space: nowrap; overflow: hidden; }
.sel .caret { border-top-color: #666; margin-right: 3px; }
.seltxt.clip { flex: none; width: 103px; }

/* panels */
.main { flex: 1; display: flex; min-height: 0; }
.panel { background: #fff; flex: none; display: flex; flex-direction: column; min-height: 0; position: relative; }
.nav { width: 262px; }
.list { width: 482px; }
.split { width: 6px; flex: none; background: #f0f0f0; border-left: 1px solid #dcdcdc; }
.phead { height: 15px; flex: none; background: #d6d8db; display: flex; justify-content: flex-end; align-items: center; padding-right: 6px; }
.pclose { color: #7d8085; font-size: 15px; font-weight: 700; font-family: "Liberation Sans", sans-serif; }
.ptitle { height: 27px; flex: none; background: #efefef; border-bottom: 1px solid #d0d0d0; color: #9a9a9a; font-weight: 500; padding: 0 0 2px 10px; display: flex; align-items: center; }
.navtools { height: 36px; flex: none; background: #efefef; border-bottom: 2px solid #cfcfcf; display: flex; align-items: center; gap: 6px; padding: 0 2px 0 9px; }
.spark { width: 16px; height: 16px; flex: none; margin-top: -1px; }
.fill { flex: 1; }
.vbtn { width: 29px; height: 27px; padding: 0; border: 1px solid #5ba8f0; border-radius: 4px; background: #f5f9fd; flex: none; }
.vbtn svg { width: 27px; height: 25px; display: block; }
.tree { flex: 1; min-height: 0; overflow: hidden; position: relative; padding-top: 2px; background: #fff; border-right: 2px solid #d8d8d8; }
.node { height: 30px; display: flex; align-items: center; padding-left: 3px; gap: 6px; white-space: nowrap; }
.fold { width: 20px; height: 18px; flex: none; }
.leaf { height: 30px; padding: 2px 0 2px 50px; }
.lrow { width: 137px; height: 26px; display: flex; align-items: center; gap: 8px; padding-left: 4px; white-space: nowrap; }
.lrow.active { background: #c6d7ee; }
.scrollthumb { position: absolute; left: 248px; top: 297px; width: 10px; height: 240px; border-radius: 5px; background: #c6c6c6; }

.tabs { height: 28px; flex: none; background: #efefef; display: flex; border-bottom: 1px solid #cfcfcf; padding-left: 1px; }
.tab { width: 82px; height: 27px; display: flex; align-items: center; justify-content: center; background: #dcdcdc; color: #9c9c9c; font-weight: 500; }
.tab.on { width: 80px; background: #efefef; color: #333; }
.ltools { height: 34px; flex: none; background: #efefef; border-bottom: 2px solid #cfcfcf; display: flex; align-items: center; color: #444; padding-top: 3px; }
.lt { display: flex; align-items: center; gap: 5px; flex: none; }
.lt .ic { width: 19px; height: 19px; }
.lt-new { margin-left: 8px; }
.lt-new .caret { margin-left: 1px; border-top-color: #555; }
.lt-copy { margin-left: 10px; }
.lt-del { margin-left: 10px; }
.lt-floor { margin-left: 12px; }
.lt-save { margin-left: 11px; }
.lt-get { margin-left: 11px; }
.more { font-size: 10px; margin-right: 3px; color: #333; letter-spacing: -2px; }
.search { height: 24px; flex: none; display: flex; align-items: center; justify-content: space-between; padding: 2px 9px 0 3px; color: #9a9a9a; background: #fff; }
.mag { width: 14px; height: 14px; }

.canvas { flex: 1; min-width: 0; background: #000; }
.cad { display: block; width: 473px; height: 590px; }
.cadt { fill: #f2f2f2; font-family: "Liberation Sans", sans-serif; text-anchor: middle; }
.axis { fill: #fff; font-size: 22px; text-anchor: middle; font-family: "Liberation Sans", sans-serif; }
.small { font-size: 12px; fill: #ddd; }
.tiny { font-size: 9px; fill: #ddd; }
.dim { font-size: 15px; fill: #fbe9f2; }
.rev { font-size: 14px; fill: #fde; }
.mark { font-size: 9.500px; fill: #fff; }
.nano { font-size: 7px; font-weight: 700; font-family: "Noto Sans CJK SC", sans-serif; fill: #fff; }

/* dialog */
.dialog {
  position: absolute; left: 263px; top: 246px; width: 609px; height: 500px;
  display: flex; flex-direction: column; background: #efefef; border-left: 1px solid #c4c4c4;
}
.dtitle { height: 33px; flex: none; background: #2d7fe0; color: #fff; display: flex; justify-content: space-between; align-items: center; padding: 0 11px; padding-bottom: 2px; }
.dtitle span:first-child { color: #e6f0fb; }
.dclose { font-family: "Liberation Sans", sans-serif; font-size: 22px; line-height: 1; }
.dbody { flex: 1; padding: 15px 15px 0 14px; display: flex; flex-direction: column; gap: 8px; min-height: 0; }
.frame { height: 403px; flex: none; border: 1px solid #9aa0a6; background: linear-gradient(90deg, #f2f2f2 32px, #fff 32px); }
.grid { border-collapse: collapse; table-layout: fixed; width: 577px; }
.c0 { width: 32px; } .c1 { width: 78px; } .c2 { width: 79px; } .c3 { width: 326px; } .c4 { width: 56px; } .c5 { width: 6px; }
.grid th, .grid td { padding: 0 0 2px; font-weight: 400; white-space: nowrap; overflow: hidden; }
.grid thead th { height: 21px; background: #7cb8fa; color: #f2f8ff; text-align: center; border-left: 2px solid #c4d6ea; border-bottom: 2px solid #d0d0d0; }
.grid thead th.corner { background: #eeeeee; border-left: 0; }
.grid tbody tr { height: 25px; }
.grid tbody th { background: #f2f2f2; text-align: center; color: #555; font-size: 16px; border-bottom: 2px solid #e8e8e8; }
.grid tbody td { padding: 0 0 2px 3px; background: #fff; border-left: 2px solid #e8e8e8; border-bottom: 2px solid #e8e8e8; }
.grid tbody td.ign { padding: 0 0 2px; text-align: center; color: #3f6fe8; }
.grid tbody td.pad { border: 0; background: #fff; padding: 0; }
.grid .cur th { background: #7cb8fa; color: #fff; font-weight: 700; border-bottom-color: #7cb8fa; }
.grid .cur td { background: #0276d6; color: #d7ebfb; border-left-color: #7cb8e8; border-bottom-color: #9fc6ea; }
.grid .cur td.ign { color: #cfe5f8; }
.grid .cur td.pad { background: #e4e4e4; }
.dfoot { display: flex; justify-content: flex-end; }
.closebtn { width: 100px; height: 36px; border: 0; border-radius: 4px 4px 0 0; background: #2d7fe0; color: #e6f0fb; font: inherit; padding: 0 0 6px; }

.arrow { position: absolute; left: 569px; top: 465px; width: 31px; height: 225px; }
```
